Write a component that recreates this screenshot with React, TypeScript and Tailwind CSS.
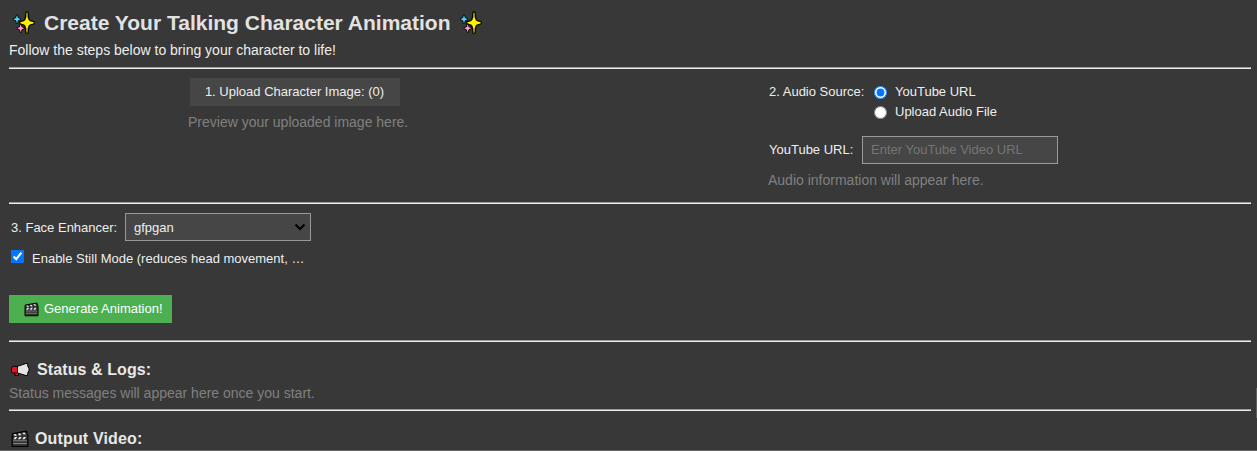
import React, { useState } from "react";

function Sparkles() {
  return (
    <svg viewBox="0 0 24 24" className="h-6 w-6 shrink-0" stroke="#000" strokeWidth="1.2" strokeLinejoin="round">
      <path d="M15 1.200h2l.9 7 1.300 1.400 4 1.200v2l-4 1.200-1.300 1.400-.9 6.800h-2l-.9-6.800-1.300-1.400-4-1.200v-2l4-1.200 1.300-1.400z" fill="#fff100" />
      <path d="M15.400 1.800h1.200v5.200h-1.200zM15.400 17h1.200v4.500h-1.200z" fill="#806f00" stroke="none" />
      <path d="M5.300 4h1.400l.5 2.700 2.300.8v1.400l-2.300.8-.5 2.700H5.300l-.5-2.700-2.300-.8V7.500l2.300-.8z" fill="#50d4ff" strokeWidth=".9" />
      <path d="M9 13.200h1.400l.5 2.600 2.300.8V18l-2.300.8-.5 2.600H9l-.5-2.600-2.300-.8v-1.400l2.300-.8z" fill="#ff9bc8" strokeWidth=".9" />
    </svg>
  );
}

function Clapper({ className }: { className: string }) {
  return (
    <svg viewBox="0 0 18 18" className={className}>
      <path d="M1.500 3.600 15.500 1.200 16.300 4.200 16.800 5v11.500H1.200V7z" fill="#333" stroke="#000" strokeWidth="1.200" strokeLinejoin="round" />
      <path d="m2.500 4.500 2-.4 1.500 1.500-2 .5zm4.400-.8 2-.4L10.400 5l-2 .4zm4.400-.8 2-.4 1.500 1.700-2 .4z" fill="#eee" />
      <path d="M4 7h2.200L4.700 9.200H2.500zm4.400 0h2.200L9.100 9.200H6.900zm4.400 0H15l-1.500 2.200h-2.200z" fill="#eee" />
      <path d="M2 10.800h14M2 13.500h14" stroke="#999" strokeWidth=".8" />
    </svg>
  );
}

function Megaphone() {
  return (
    <svg viewBox="0 0 20 16" className="h-4 w-5 shrink-0" stroke="#000" strokeWidth="1" strokeLinejoin="round">
      <path d="M4 9.500h4.500v4H5z" fill="#e81224" />
      <path d="m7.500 4.300 8.500-2.800h1.500l.5 3.500 1 1v3l-1 1-.5 3.500H16l-8.500-2.500z" fill="#e4e4e4" />
      <path d="M7.500 4.300V11H2.700L1.500 9.800V6l1.200-1.700z" fill="#e81224" />
    </svg>
  );
}

function Rule() {
  return <hr className="h-0.5 shrink-0 border-0 border-t border-b border-t-[#9a9a9a] border-b-[#eeeeee]" />;
}

function Radio({ checked, label, onSelect }: { checked: boolean; label: string; onSelect: () => void }) {
  return (
    <label className="flex h-5 items-center gap-2">
      <input type="radio" name="source" checked={checked} onChange={onSelect} className="m-0 h-[13px] w-[13px]" />
      <span>{label}</span>
    </label>
  );
}

export default function App() {
  const [source, setSource] = useState("youtube");
  const [still, setStill] = useState(true);
  return (
    <div className="relative h-[451px] overflow-hidden border-b border-[#666666] bg-[#383838] pr-1.5 pl-[9px] font-['Liberation_Sans',Arial,sans-serif] text-[13px] text-[#eeeeee]">
      <header className="h-[67px] pt-[11px]">
        <h2 className="flex h-6 items-center text-[21px] font-bold whitespace-nowrap text-[#e2e2e2]">
          <span className="ml-0.5 flex"><Sparkles /></span>
          <span className="ml-[9px] w-[406px]">Create Your Talking Character Animation</span>
          <span className="ml-2 flex"><Sparkles /></span>
        </h2>
        <p className="mt-1.5 text-[14px] leading-[18px]">Follow the steps below to bring your character to life!</p>
      </header>
      <Rule />
      <div className="flex h-[133px] pt-[9px]">
        <div className="w-[759px] pl-[180px]">
          <button className="ml-px flex h-7 w-[210px] items-center justify-center bg-[#464646] pr-px">1. Upload Character Image: (0)</button>
          <p className="mt-[7px] -ml-px text-[14px] leading-[18px] text-[#808080]">Preview your uploaded image here.</p>
        </div>
        <div className="pt-1">
          <div className="flex gap-[9px]">
            <span className="ml-px w-[96px] leading-5 whitespace-nowrap">2. Audio Source:</span>
            <div>
              <Radio label="YouTube URL" checked={source === "youtube"} onSelect={() => setSource("youtube")} />
              <Radio label="Upload Audio File" checked={source === "file"} onSelect={() => setSource("file")} />
            </div>
          </div>
          <label className="mt-[14px] ml-px flex items-center">
            <span className="w-[93px] whitespace-nowrap">YouTube URL:</span>
            <input placeholder="Enter YouTube Video URL" className="h-7 w-[196px] border border-[#999999] bg-[#464646] px-2 pb-px outline-none placeholder:text-[#757575]" />
          </label>
          <p className="mt-[7px] text-[14px] leading-[18px] text-[#808080]">Audio information will appear here.</p>
        </div>
      </div>
      <Rule />
      <div className="h-[136px] pt-[9px]">
        <label className="flex items-center pl-0.5">
          <span className="w-[114px] pt-px whitespace-nowrap">3. Face Enhancer:</span>
          <span className="relative">
            <select className="block h-7 w-[186px] appearance-none border border-[#999999] bg-[#464646] px-2 pt-px outline-none">
              <option>gfpgan</option>
            </select>
            <svg viewBox="0 0 12 8" className="pointer-events-none absolute top-2.5 right-[5px] h-2 w-3">
              <path d="m1.500 1.500 4.500 4.500 4.500-4.500" fill="none" stroke="#000" strokeWidth="2" />
            </svg>
          </span>
        </label>
        <label className="mt-[7px] flex h-5 items-center gap-2 pl-0.5">
          <input type="checkbox" checked={still} onChange={() => setStill(!still)} className="mt-0 mr-0 mb-[3px] ml-0 h-[13px] w-[13px]" />
          <span className="pt-px">Enable Still Mode (reduces head movement, …</span>
        </label>
        <button className="mt-[27px] flex h-7 w-[163px] items-center bg-[#4caf50] pl-[15px] whitespace-nowrap text-white">
          <Clapper className="h-[15px] w-[15px]" />
          <span className="ml-[5px]">Generate Animation!</span>
        </button>
      </div>
      <Rule />
      <div className="h-[67px] pt-[18px]">
        <h3 className="flex h-5 items-center pl-px text-[16px] font-bold tracking-[0.1px] text-[#e8e8e8]">
          <Megaphone />
          <span className="ml-[7px]">Status &amp; Logs:</span>
        </h3>
        <p className="mt-1 text-[14px] leading-[18px] text-[#808080]">Status messages will appear here once you start.</p>
      </div>
      <Rule />
      <h3 className="mt-[18px] flex h-5 items-center pl-0.5 text-[16px] font-bold tracking-[0.15px] text-[#e8e8e8]">
        <Clapper className="h-[18px] w-[18px]" />
        <span className="ml-1.5">Output Video:</span>
      </h3>
      <div className="absolute top-[388px] right-0 h-[30px] w-px bg-[#606060]" />
    </div>
  );
}
